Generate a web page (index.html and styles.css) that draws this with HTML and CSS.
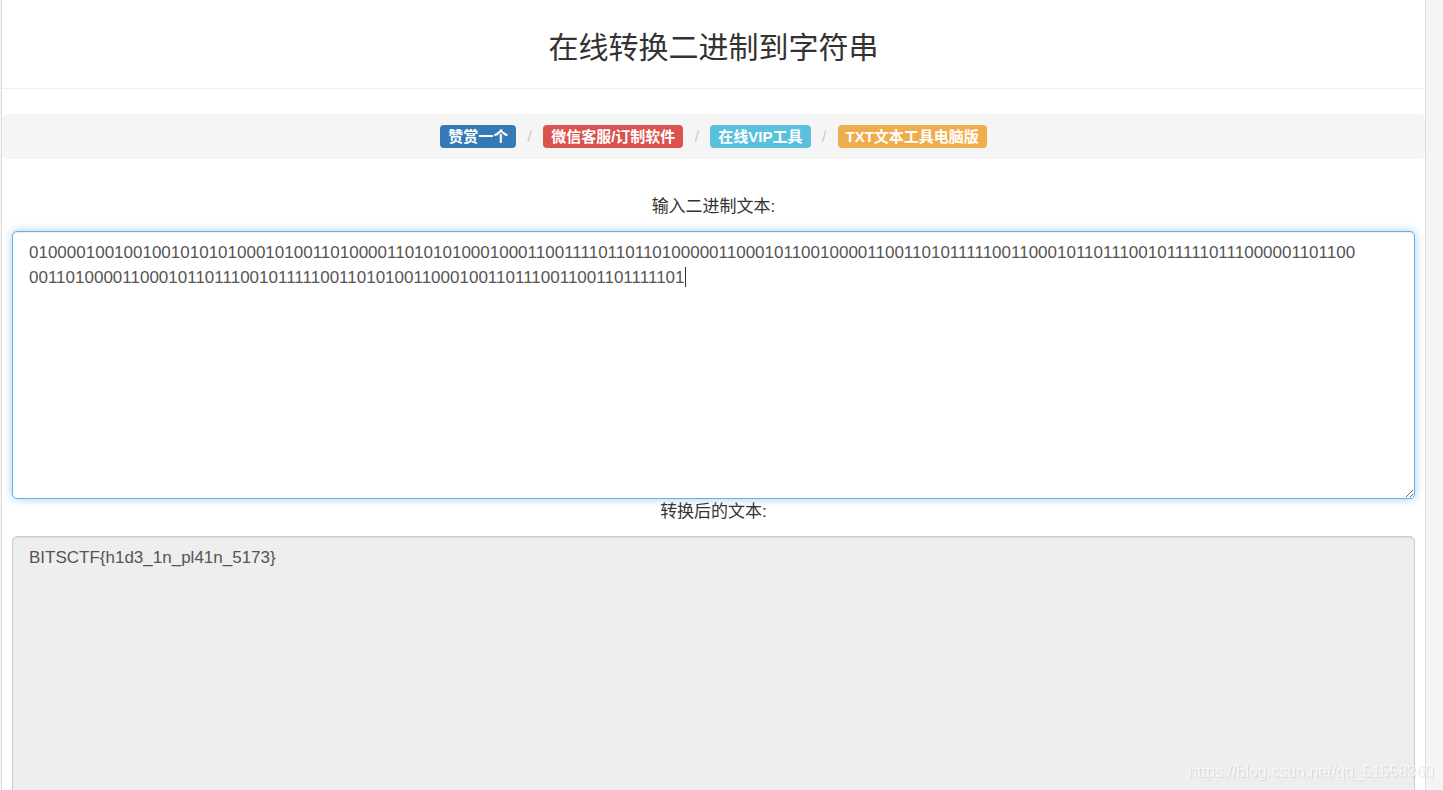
FILE: index.html
```html
<!DOCTYPE html>
<html lang="zh-CN">
<head>
<meta charset="utf-8">
<meta name="viewport" content="width=device-width, initial-scale=1">
<title>在线转换二进制到字符串</title>
<link rel="stylesheet" href="styles.css">
</head>
<body>
<main class="page">
  <header class="page-header">
    <h1 class="page-title">在线转换二进制到字符串</h1>
  </header>
  <nav class="links">
    <a class="tag tag-primary" href="#donate">赞赏一个</a>
    <span class="slash">/</span>
    <a class="tag tag-danger" href="#service">微信客服/订制软件</a>
    <span class="slash">/</span>
    <a class="tag tag-info" href="#vip">在线VIP工具</a>
    <span class="slash">/</span>
    <a class="tag tag-warning" href="#desktop">TXT文本工具电脑版</a>
  </nav>
  <form class="converter">
    <label class="caption" for="source">输入二进制文本:</label>
    <div class="editor">
      <textarea class="field field-active" id="source" spellcheck="false">010000100100100101010100010100110100001101010100010001100111101101101000001100010110010000110011010111110011000101101110010111110111000001101100
001101000011000101101110010111110011010100110001001101110011001101111101</textarea>
      <span class="caret"></span>
    </div>
    <label class="caption" for="result">转换后的文本:</label>
    <textarea class="field field-result" id="result" spellcheck="false" readonly>BITSCTF{h1d3_1n_pl41n_5173}</textarea>
  </form>
</main>
<div class="watermark">https://blog.csdn.net/qq_51558360</div>
</body>
</html>
```
FILE: styles.css
```css
* {
  box-sizing: border-box;
}

html {
  scrollbar-width: none;
}

body {
  margin: 0;
  padding: 0 17px 0 1px;
  background: #f5f3f4;
  color: #333;
  font-family: "Liberation Sans", Arial, "Noto Sans CJK SC", sans-serif;
  font-size: 17px;
  line-height: 25px;
}

.page {
  min-height: 100vh;
  padding-bottom: 24px;
  border: solid #ddd;
  border-width: 0 1px;
  background: #fff;
}

.page-header {
  padding: 28px 0 20px;
  border-bottom: 1px solid #eee;
  text-align: center;
}

.page-title {
  margin: 0;
  font-size: 30px;
  font-weight: 400;
  line-height: 40px;
}

.links {
  display: flex;
  justify-content: center;
  align-items: center;
  margin-top: 25px;
  padding: 11px 16px;
  border-radius: 5px;
  background: #f5f5f5;
}

.tag {
  padding: 0 8px;
  border-radius: 4px;
  color: #fff;
  font-size: 15px;
  font-weight: 700;
  line-height: 23px;
  text-decoration: none;
}

.tag-primary { background: #337ab7; }
.tag-danger { background: #d9534f; }
.tag-info { background: #5bc0de; }
.tag-warning { background: #f0ad4e; }

.slash {
  width: 27px;
  color: #ccc;
  line-height: 23px;
  text-align: center;
}

.converter {
  display: flex;
  flex-direction: column;
  margin-top: 35px;
  padding: 0 10px;
}

.caption {
  padding-bottom: 12px;
  text-align: center;
}

.editor {
  position: relative;
}

.caret {
  position: absolute;
  top: 36px;
  left: 673px;
  width: 1px;
  height: 20px;
  background: #333;
}

.field {
  display: block;
  width: 100%;
  height: 268px;
  padding: 8px 16px;
  border: 1px solid #ccc;
  border-radius: 5px;
  outline: 0;
  background: #fff;
  box-shadow: inset 0 1px 1px rgba(0, 0, 0, .075);
  color: #555;
  font: inherit;
  resize: vertical;
}

.field-active,
.field:focus {
  border-color: #66afe9;
  box-shadow: inset 0 1px 1px rgba(0, 0, 0, .075), 0 0 10px rgba(102, 175, 233, .6);
}

.field-result {
  background: #eee;
}

.watermark {
  position: fixed;
  right: 9px;
  bottom: 6px;
  color: rgba(255, 255, 255, .6);
  font-size: 16px;
  text-shadow: 1px 1px 1px rgba(0, 0, 0, .1);
  pointer-events: none;
}
```
